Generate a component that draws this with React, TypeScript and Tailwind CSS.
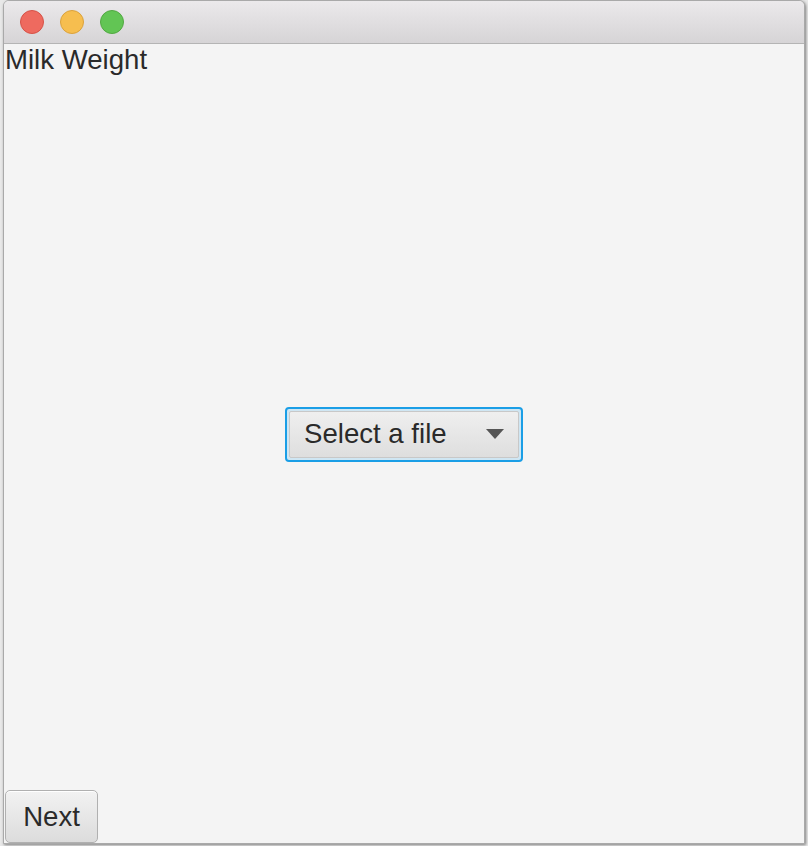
import React from "react";

export default function App() {
  return (
    <div className="w-[808px] h-[846px] bg-[#e8e8e8] relative overflow-hidden" style={{ fontFamily: '"Liberation Sans", Arial, sans-serif' }}>
      <div className="absolute left-[3px] top-0 w-[802px] h-[844px] flex flex-col rounded-t-[6px] border border-[#a9a9a9] bg-[#f4f4f4] shadow-[1px_1px_3px_rgba(0,0,0,0.45)] overflow-hidden">
        <div className="h-[43px] shrink-0 flex items-center gap-[16px] pl-[16px] bg-gradient-to-b from-[#ebe9eb] to-[#d6d4d6] border-b border-[#b4b4b4]">
          <span className="w-[24px] h-[24px] rounded-full bg-[#ee6a5f] border border-[#d65247]" />
          <span className="w-[24px] h-[24px] rounded-full bg-[#f6be4f] border border-[#dba23c]" />
          <span className="w-[24px] h-[24px] rounded-full bg-[#62c554] border border-[#52a842]" />
        </div>
        <div className="flex-1 flex flex-col relative">
          <div className="text-[27.6px] leading-[30px] text-[#2a2a2a] pl-[1px] pt-[1px]">Milk Weight</div>
          <div className="flex-1 flex items-center justify-center pt-[3px]">
            <div className="w-[238px] h-[55px] rounded-[4px] border-[2px] border-[#1a9ee6] p-[2px] bg-[#cfe6f3]">
              <div className="w-full h-full rounded-[2px] bg-gradient-to-b from-[#efefef] to-[#dedede] border border-[#c8c8c8] flex items-center pl-[14px] pr-[14px] justify-between">
                <span className="text-[27.6px] text-[#2a2a2a]">Select a file</span>
                <svg width="18" height="10" viewBox="0 0 18 10"><path d="M0 0 H18 L9 10 Z" fill="#555" /></svg>
              </div>
            </div>
          </div>
          <div className="pl-[1px] pb-[0px]">
            <div className="w-[93px] h-[53px] rounded-[5px] border border-[#b0b0b0] bg-gradient-to-b from-[#f2f2f2] to-[#dcdcdc] flex items-center justify-center text-[27.6px] text-[#2a2a2a] shadow-[inset_0_1px_0_#fff]">Next</div>
          </div>
        </div>
      </div>
    </div>
  );
}
